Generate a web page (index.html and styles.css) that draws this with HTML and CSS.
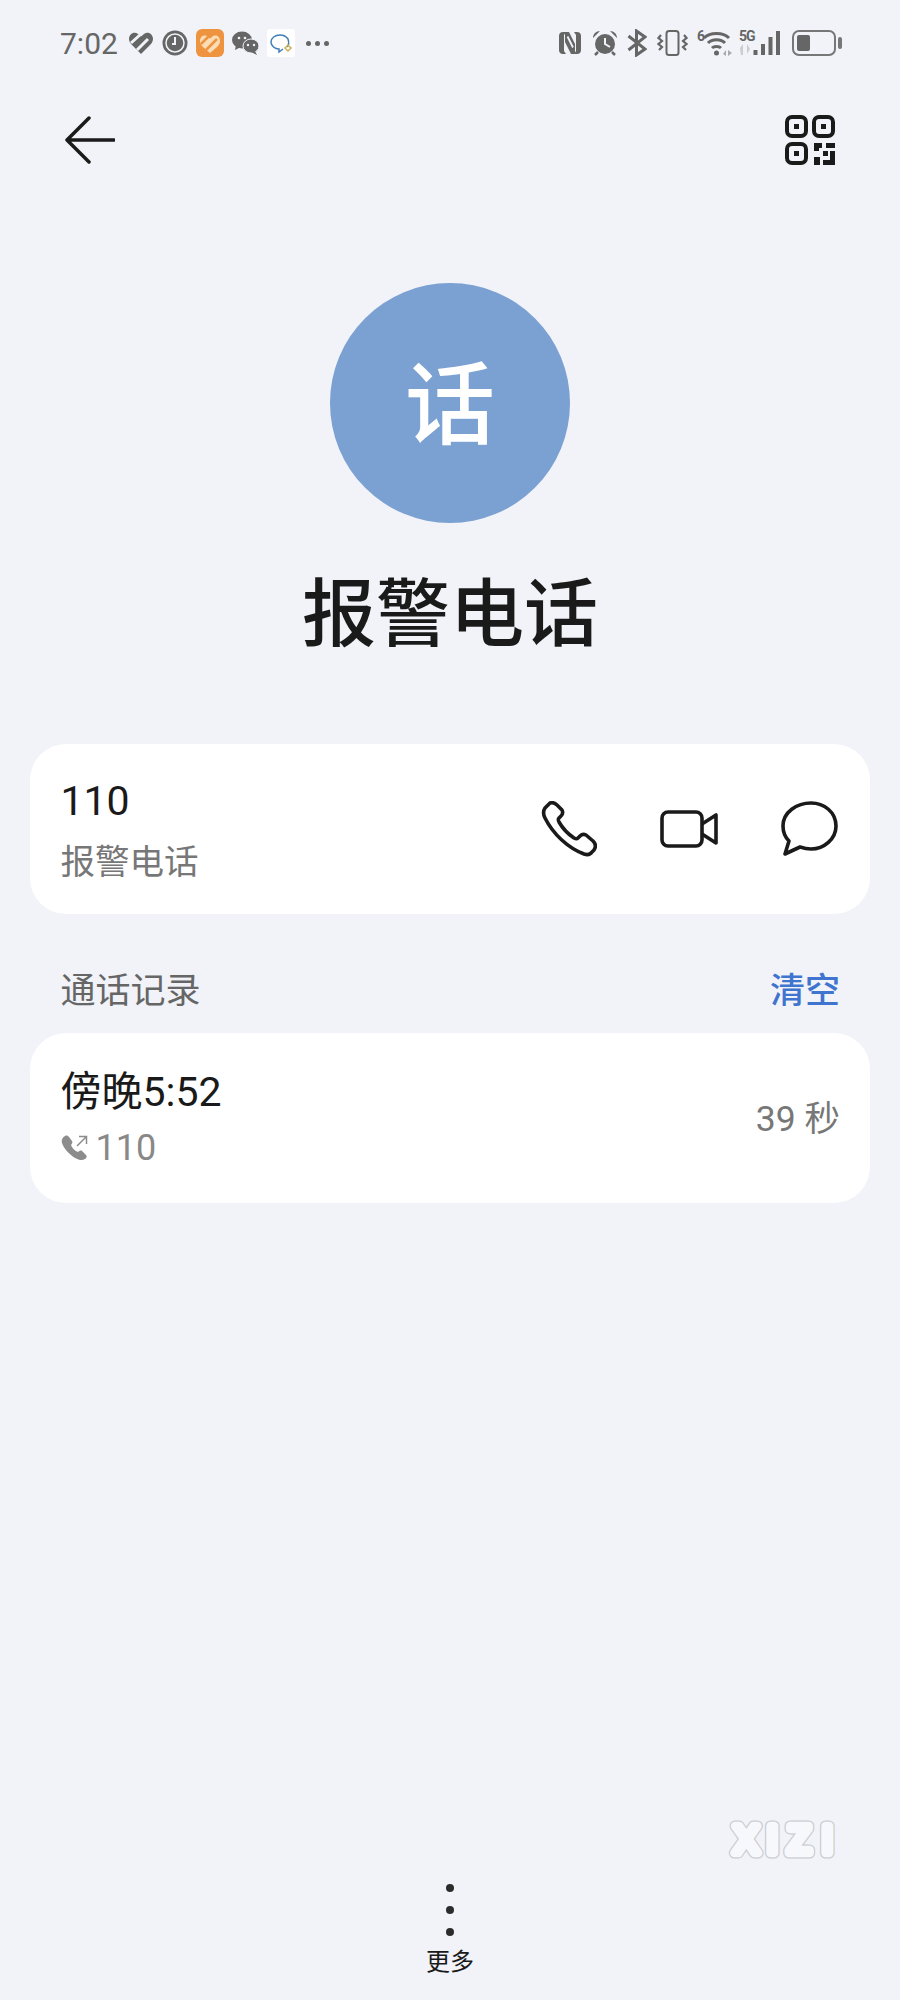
FILE: index.html
```html
<!DOCTYPE html>
<html lang="zh-CN">
<head>
  <meta charset="UTF-8" />
  <meta name="viewport" content="width=device-width, initial-scale=1.0" />
  <title>报警电话</title>
  <link rel="stylesheet" href="styles.css">
</head>
<body>

<div class="page">
  <!-- 状态栏 -->
  <div class="statusbar">
    <div class="status-left">
      <span class="time">7:02</span>
      <svg class="si" width="26" height="24" viewBox="0 0 26 24">
        <path d="M1 8C1 3 6 0 10 3L13 5.500L16 3C20 0 25 3 25 8C25 11 23 13 21 15L13 23L5 15C3 13 1 11 1 8Z" fill="#666"/>
        <path d="M3 12L13 3M9 19L20 8" stroke="#f1f3f8" stroke-width="3"/>
      </svg>
      <svg class="si" width="26" height="26" viewBox="0 0 26 26">
        <circle cx="13" cy="13" r="12.500" fill="#666"/>
        <circle cx="13" cy="13" r="9" fill="none" stroke="#f1f3f8" stroke-width="1.500"/>
        <path d="M13 7V14L10 14" fill="none" stroke="#f1f3f8" stroke-width="2"/>
      </svg>
      <svg class="si" width="28" height="28" viewBox="0 0 28 28">
        <rect width="28" height="28" rx="6" fill="#ee9440"/>
        <path d="M4 12C4 7 9 5 12 8L14 9.500L16 8C19 5 24 7 24 12C24 14 23 16 21 18L14 24L7 18C5 16 4 14 4 12Z" fill="#fbdcb4"/>
        <path d="M5 15L14 6M10 21L21 10" stroke="#ee9440" stroke-width="2.500"/>
      </svg>
      <svg class="si" width="27" height="24" viewBox="0 0 27 24">
        <ellipse cx="10" cy="9" rx="10" ry="8.500" fill="#666"/>
        <path d="M4 14L3 19L9 16Z" fill="#666"/>
        <ellipse cx="19" cy="15" rx="8" ry="7" fill="#666" stroke="#f1f3f8" stroke-width="1"/>
        <path d="M23 20L25 24L19 21Z" fill="#666"/>
        <circle cx="7" cy="7" r="1.300" fill="#f1f3f8"/>
        <circle cx="13" cy="7" r="1.300" fill="#f1f3f8"/>
        <circle cx="16" cy="14" r="1.200" fill="#f1f3f8"/>
        <circle cx="22" cy="14" r="1.200" fill="#f1f3f8"/>
      </svg>
      <svg class="si" width="28" height="28" viewBox="0 0 28 28">
        <rect width="28" height="28" rx="3" fill="#fff"/>
        <path d="M20 18C22 16 22 13 21 10C19 7 16 6 13 6C8 6 4 9 4 13C4 17 8 20 12 20L12 23L16 20" fill="none" stroke="#3f7fb5" stroke-width="1.500"/>
        <path d="M21 16L24 19L21 22L18 19Z" fill="none" stroke="#c9b25a" stroke-width="1.500"/>
      </svg>
      <span class="more-dots"><i></i><i></i><i></i></span>
    </div>
    <div class="status-right">
      <svg class="si" width="24" height="24" viewBox="0 0 24 24">
        <path d="M8 1H5C2.500 1 1 2.500 1 5V19C1 21.500 2.500 23 5 23H8L6 20V4Z" fill="#666"/>
        <path d="M16 1H19C21.500 1 23 2.500 23 5V19C23 21.500 21.500 23 19 23H16L18 20V4Z" fill="#666"/>
        <path d="M7 1H11L17 13V23H13L7 11Z" fill="#666"/>
        <path d="M9.500 5.500L15 16.500" stroke="#f1f3f8" stroke-width="1.800"/>
      </svg>
      <svg class="si" width="26" height="26" viewBox="0 0 26 26">
        <circle cx="13" cy="14" r="10" fill="#666"/>
        <path d="M1 8C1 4 4 1 8 1Z M25 8C25 4 22 1 18 1Z" fill="#666"/>
        <path d="M6 22L3 25M20 22L23 25" fill="none" stroke="#666" stroke-width="2.500"/>
        <path d="M13 8V14L18 17" fill="none" stroke="#f1f3f8" stroke-width="2"/>
      </svg>
      <svg class="si" width="20" height="28" viewBox="0 0 20 28">
        <path d="M1.500 7L18 20L9.500 26V2L18 8L1.500 21" fill="none" stroke="#666" stroke-width="3"/>
      </svg>
      <svg class="si" width="31" height="28" viewBox="0 0 31 28">
        <rect x="9.500" y="2" width="12" height="24" rx="2.500" fill="none" stroke="#666" stroke-width="2"/>
        <path d="M4 6L1.500 9L5 12L1.500 15L5 18L2 21M27 6L29.500 9L26 12L29.500 15L26 18L29 21" fill="none" stroke="#666" stroke-width="2.200"/>
      </svg>
      <svg class="si wifi" width="36" height="28" viewBox="0 0 36 28">
        <text x="0" y="12" class="net-text">6</text>
        <path d="M7 9C13 3 26 3 32 9M11 14C15 9.500 24 9.500 28 14M15 19C17 17 22 17 24 19" fill="none" stroke="#666" stroke-width="3"/>
        <circle cx="19.500" cy="24" r="2.500" fill="#666"/>
        <path d="M26 25L29 21V27ZM31 21L35 24L31 27Z" fill="#aaa"/>
      </svg>
      <svg class="si signal" width="43" height="28" viewBox="0 0 43 28">
        <text x="0" y="12" class="net-text">5G</text>
        <path d="M1 19L4 15V26H2M8 15L11 20L8 25Z" fill="#ccc"/>
        <rect x="14.500" y="21" width="4" height="5" fill="#666"/>
        <rect x="22" y="15" width="4" height="11" fill="#666"/>
        <rect x="29.500" y="8" width="4" height="18" fill="#666"/>
        <rect x="37" y="2" width="4" height="24" fill="#666"/>
      </svg>
      <svg class="si battery" width="50" height="26" viewBox="0 0 50 26">
        <rect x="1" y="1" width="42" height="24" rx="6" fill="none" stroke="#777" stroke-width="2"/>
        <rect x="5" y="5" width="13" height="16" rx="2" fill="#666"/>
        <rect x="46" y="7" width="4" height="12" rx="2" fill="#777"/>
      </svg>
    </div>
  </div>

  <div class="topbar">
    <svg width="50" height="50" viewBox="0 0 50 50">
      <path d="M24 3L2 25L24 47M2 25H49" fill="none" stroke="#1a1a1a" stroke-width="3.500" stroke-linecap="round" stroke-linejoin="round"/>
    </svg>
    <svg width="50" height="50" viewBox="0 0 50 50">
      <rect x="2" y="2" width="19" height="19" rx="5" fill="none" stroke="#1a1a1a" stroke-width="4"/>
      <rect x="29" y="2" width="19" height="19" rx="5" fill="none" stroke="#1a1a1a" stroke-width="4"/>
      <rect x="2" y="29" width="19" height="19" rx="5" fill="none" stroke="#1a1a1a" stroke-width="4"/>
      <rect x="9" y="9" width="5" height="5" fill="#1a1a1a"/>
      <rect x="36" y="9" width="5" height="5" fill="#1a1a1a"/>
      <rect x="9" y="36" width="5" height="5" fill="#1a1a1a"/>
      <path d="M29 28H37V33H34V36H29ZM41 28H50V33H41ZM38 36H43V41H38ZM45 36H50V50H38V45H45ZM29 42H35V50H29Z" fill="#1a1a1a"/>
    </svg>
  </div>

  <div class="contact">
    <div class="avatar">话</div>
    <h1 class="name">报警电话</h1>
  </div>

  <div class="card">
    <div class="card-text">
      <div class="primary">110</div>
      <div class="secondary">报警电话</div>
    </div>
    <div class="actions">
      <svg width="56" height="56" viewBox="0 0 56 56">
        <path d="M9 2C12 1 14 2 16 4L21 9C22 11 22 13 20 15L18 17C17 18 17 19 18 21C22 28 27 33 33 37C35 38 36 38 37 37L39 35C41 33 43 33 45 34L52 40C55 43 55 46 53 49L51 51C49 54 46 54 43 53C27 47 12 33 4 17C2 13 2 10 4 7Z" fill="none" stroke="#1a1a1a" stroke-width="3.600" stroke-linejoin="round"/>
      </svg>
      <svg width="58" height="38" viewBox="0 0 58 38">
        <rect x="2" y="2" width="40" height="34" rx="6" fill="none" stroke="#1a1a1a" stroke-width="3.600"/>
        <path d="M42 14L56 5V33L42 24" fill="none" stroke="#1a1a1a" stroke-width="3.600" stroke-linejoin="round"/>
      </svg>
      <svg width="57" height="56" viewBox="0 0 57 56">
        <path d="M30 2C43 2 55 11 55 25C55 38 43 48 30 48C26 48 22 47 19 46L4 53L8 40C4 36 2 31 2 25C2 11 16 2 30 2Z" fill="none" stroke="#1a1a1a" stroke-width="3.600" stroke-linejoin="round"/>
      </svg>
    </div>
  </div>

  <div class="section-head">
    <span class="section-title">通话记录</span>
    <span class="clear">清空</span>
  </div>

  <div class="card">
    <div class="card-text">
      <div class="primary call-time">傍晚<span class="digits">5:52</span></div>
      <div class="call-number">
        <svg width="27" height="26" viewBox="0 0 27 26">
          <path d="M4 1C6 0 7 1 8 2L11 6C12 7 11 9 10 10C11 13 14 16 17 17C18 16 20 15 21 16L25 20C26 21 26 23 24 24C21 26 18 25 14 23C8 19 3 14 1 8C0 5 2 2 4 1Z" fill="#8c8c8c"/>
          <path d="M16 11L25 2M18 1.500H25.500V9" fill="none" stroke="#8c8c8c" stroke-width="1.500"/>
        </svg>
        <span>110</span>
      </div>
    </div>
    <span class="duration">39 秒</span>
  </div>

  <div class="bottom">
    <span class="dots"><i></i><i></i><i></i></span>
    <span class="bottom-label">更多</span>
  </div>

  <!-- 水印：同一段文字描两遍，粗灰边在下，浅色在上，得到空心圆头字 -->
  <svg class="watermark" width="120" height="50" viewBox="0 0 120 50">
    <use href="#wm-text" class="wm-outer"/>
    <g class="wm-inner">
      <text id="wm-text" x="11.500 45 65.500 100" y="38.500">XIZI</text>
    </g>
  </svg>
</div>

</body>
</html>
```

FILE: styles.css
```css
body {
  margin: 0;
  font-family: Roboto, "Noto Sans CJK SC", sans-serif;
  background-color: #f1f3f8;
}

.page {
  position: relative;
  height: 2000px;
  display: flex;
  flex-direction: column;
  overflow: hidden;
}

.statusbar {
  display: flex;
  justify-content: space-between;
  align-items: center;
  height: 30px;
  margin-top: 28px;
  padding: 0 58px 0 60px;
}

.status-left, .status-right {
  display: flex;
  align-items: center;
}

.status-left { gap: 8px; }
.status-right { gap: 9.600px; }

.si { display: block; }
.signal { margin-left: -3.600px; }

.time {
  font-size: 30px;
  color: #666;
  margin-right: 2px;
}

.more-dots {
  display: flex;
  gap: 4px;
  margin-left: 3px;
}

.more-dots i {
  width: 5px;
  height: 5px;
  border-radius: 50%;
  background-color: #666;
}

.net-text {
  font-size: 14px;
  font-weight: bold;
  letter-spacing: -1px;
  fill: #666;
}

.topbar {
  display: flex;
  justify-content: space-between;
  align-items: center;
  margin-top: 57px;
  padding: 0 65px;
}

.contact {
  display: flex;
  flex-direction: column;
  align-items: center;
}

.avatar {
  width: 240px;
  height: 240px;
  box-sizing: border-box;
  padding-bottom: 10px;
  margin-top: 118px;
  border-radius: 50%;
  background-color: #7ba0d2;
  color: white;
  font-size: 90px;
  font-weight: 500;
  display: flex;
  align-items: center;
  justify-content: center;
}

.name {
  margin: 43px 0 0;
  font-size: 74px;
  line-height: 98px;
  font-weight: 500;
  color: #1a1a1a;
}

.card {
  display: flex;
  justify-content: space-between;
  align-items: center;
  height: 170px;
  margin: 0 30px;
  padding: 0 32px 0 30.500px;
  background: white;
  border-radius: 36px;
}

.contact + .card { margin-top: 80px; }

.primary {
  font-size: 41px;
  line-height: 54px;
  font-weight: 450;
  color: #1a1a1a;
}

.secondary {
  font-size: 34.500px;
  line-height: 46px;
  margin-top: 11px;
  color: #777;
}

.actions {
  display: flex;
  align-items: center;
  gap: 63px;
}

.section-head {
  display: flex;
  justify-content: space-between;
  align-items: center;
  box-sizing: border-box;
  height: 119px;
  padding: 27px 60px 0 60.500px;
  font-size: 35px;
}

.section-title {
  color: #666;
}

.clear {
  color: #3f74cf;
  font-weight: 500;
}

.call-time {
  font-weight: 400;
}

.digits {
  font-weight: 450;
}

.call-number {
  display: flex;
  align-items: center;
  gap: 8px;
  margin-top: 6px;
  font-size: 36px;
  line-height: 46px;
  color: #888;
}

.duration {
  font-size: 35.500px;
  color: #777;
  margin: 0 -2px 5px 0;
}

.bottom {
  margin-top: auto;
  margin-bottom: 20px;
  display: flex;
  flex-direction: column;
  align-items: center;
}

.dots {
  display: flex;
  flex-direction: column;
  gap: 14px;
}

.dots i {
  width: 8px;
  height: 8px;
  border-radius: 50%;
  background-color: #2c2c2c;
}

.bottom-label {
  margin-top: 8px;
  font-size: 24px;
  line-height: 36px;
  color: #1a1a1a;
}

/* 水印叠在页面右下角 */
.watermark {
  position: absolute;
  left: 722px;
  top: 1814px;
}

.watermark text {
  font-family: "Liberation Sans", sans-serif;
  font-size: 38px;
  fill: #f8f9fb;
}

.wm-outer, .wm-inner {
  stroke-linecap: round;
  stroke-linejoin: round;
}

.wm-outer {
  stroke: #cacbd1;
  stroke-width: 11px;
}

.wm-inner {
  stroke: #f7f8fb;
  stroke-width: 8.500px;
}
```
